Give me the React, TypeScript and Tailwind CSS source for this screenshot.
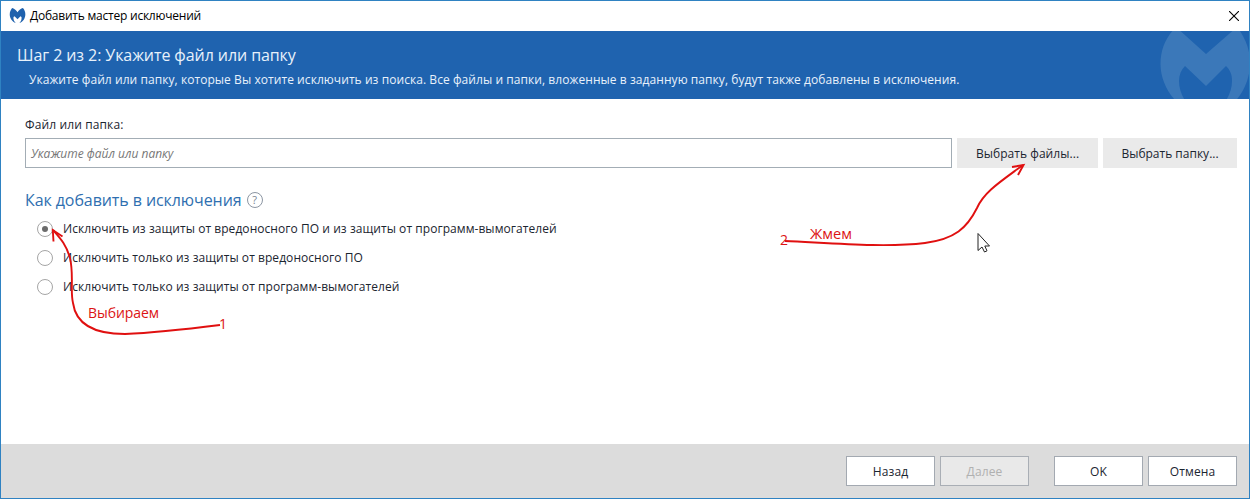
import type { ReactNode } from 'react';

const BUTTERFLY =
  'M17 -4 L47 23 L78 -4 C86 6 91 18 91 32 C91 54 78 76 57 82 C66 73 73 62 73 50 C73 43 71 39 67 35 L47 55 L26 35 C22 39 20 44 20 50 C20 62 27 73 36 82 C16 76 1.5 54 1.5 33 C1.5 18 7 6 17 -4 Z';

const SMALL_BUTTERFLY =
  'M15 -4 C25 -1 39 9 46 21 C53 9 67 -1 77 -4 C86 6 91 18 91 32 C91 54 78 76 57 82 C66 73 71 62 69 47 L63 44 L46 60 L29 44 L23 47 C21 62 27 73 36 82 C16 76 1.5 54 1.5 33 C1.5 18 7 6 15 -4 Z';

function FooterButton({ children, disabled = false, className = '' }: { children: ReactNode; disabled?: boolean; className?: string }) {
  return (
    <button
      disabled={disabled}
      className={`flex h-[30px] w-[89px] items-center justify-center border pt-px text-[12px] tracking-[0.12px] ${disabled ? 'border-[#a9aeb5] bg-[#e9e9e9] text-[#b0b0b0]' : 'border-[#a3a9b1] bg-white text-[#1b2530]'} ${className}`}
    >
      {children}
    </button>
  );
}

function Option({ label, checked = false }: { label: string; checked?: boolean }) {
  return (
    <label className="flex h-[29px] items-center">
      <span className="flex size-4 shrink-0 items-center justify-center rounded-full border border-[#a5a5a5] bg-white">
        {checked && <span className="size-1.5 rounded-full bg-[#6b6b6b]" />}
      </span>
      <span className="ml-2.5 whitespace-nowrap text-[12px] tracking-[0.055px]">{label}</span>
    </label>
  );
}

export default function App() {
  return (
    <div className="relative flex h-[499px] w-[1250px] flex-col overflow-hidden border border-[#2f82c2] bg-white font-['Open_Sans','Noto_Sans',sans-serif] text-[#1b2530]">
      <div className="flex h-[30px] shrink-0 items-center pl-2 pr-2.5">
        <svg className="-mt-px h-[15px] w-[17px]" viewBox="0 -4 92 86">
          <path d={SMALL_BUTTERFLY} fill="#1f62ad" />
        </svg>
        <span className="ml-1 whitespace-nowrap text-[12px] tracking-[-0.23px] text-black">Добавить мастер исключений</span>
        <svg className="ml-auto size-2.5" viewBox="0 0 10 10" stroke="#000" strokeWidth="1.1">
          <path d="M0 0 10 10M10 0 0 10" />
        </svg>
      </div>

      <header className="relative h-[68px] shrink-0 overflow-hidden bg-[#1f63af] text-[#e8f1fb]">
        <h1 className="whitespace-nowrap pl-4 pt-3 text-[16px] leading-6 tracking-[-0.08px]">Шаг 2 из 2: Укажите файл или папку</h1>
        <p className="whitespace-nowrap pl-7 pt-px text-[12px] leading-6 tracking-[0.065px]">
          Укажите файл или папку, которые Вы хотите исключить из поиска. Все файлы и папки, вложенные в заданную папку, будут также добавлены в исключения.
        </p>
        <svg className="absolute right-0 top-0 h-[68px] w-[90px]" viewBox="0 0 90 68">
          <path d={BUTTERFLY} fill="#3b78b9" />
        </svg>
      </header>

      <main className="flex grow flex-col pl-6 pr-3 pt-[17px]">
        <div className="text-[12px] leading-[18px] tracking-[0.12px]">Файл или папка:</div>
        <div className="mt-1 flex h-[30px]">
          <div className="flex w-[927px] items-center border border-[#a3adb5] pl-[5px] pt-px text-[12px] italic text-[#777]">Укажите файл или папку</div>
          <button className="ml-[5px] w-[141px] bg-[#eaeaea] pt-0.5 text-[12px] tracking-[0.05px]">Выбрать файлы...</button>
          <button className="ml-[5px] w-[134px] bg-[#eaeaea] pt-0.5 text-[12px]">Выбрать папку...</button>
        </div>
        <div className="mt-5 flex h-6 items-center">
          <h2 className="whitespace-nowrap text-[16px] tracking-[-0.08px] text-[#2f6fb0]">Как добавить в исключения</h2>
          <span className="ml-[5px] flex size-4 items-center justify-center rounded-full border border-[#8c96a3] text-[11px] text-[#7b8692]">?</span>
        </div>
        <div className="mt-0.5 flex flex-col pl-3">
          <Option checked label="Исключить из защиты от вредоносного ПО и из защиты от программ-вымогателей" />
          <Option label="Исключить только из защиты от вредоносного ПО" />
          <Option label="Исключить только из защиты от программ-вымогателей" />
        </div>
      </main>

      <footer className="flex h-[54px] shrink-0 items-center justify-end bg-[#dcdcdc] pr-3">
        <FooterButton>Назад</FooterButton>
        <FooterButton disabled className="ml-[5px]">Далее</FooterButton>
        <FooterButton className="ml-[25px]">OK</FooterButton>
        <FooterButton className="ml-[5px]">Отмена</FooterButton>
      </footer>

      <svg className="pointer-events-none absolute -left-px -top-px h-[499px] w-[1250px]" viewBox="0 0 1250 499" fill="none">
        <g stroke="#e01010" strokeWidth="1.9">
          <path d="M220 325C180 330 150 333 125 334C95 334 76 325 73 303C70 291 74 275 70 258C66 244 60 238 53 230" />
          <path d="M53.5 241.5L52.8 230L62.5 236.5" />
          <path d="M785 241C830 243 885 248 925 243C955 239 967 228 977 208C984 192 1000 182 1023 165" />
          <path d="M1012 167L1023.5 165L1018 175" />
        </g>
        <path d="M978 233.5V250.5L982 247L984.5 252L987 250.8L984.8 246H989.5Z" fill="#fff" stroke="#222" />
        <g fill="#dc1414" fontFamily="Open Sans, sans-serif" fontSize="14">
          <text x="88" y="318" textLength="71">Выбираем</text>
          <text x="219" y="328.5">1</text>
          <text x="810" y="239" fontSize="14.5" textLength="42" lengthAdjust="spacingAndGlyphs">Жмем</text>
          <text x="780" y="245">2</text>
        </g>
      </svg>
    </div>
  );
}
